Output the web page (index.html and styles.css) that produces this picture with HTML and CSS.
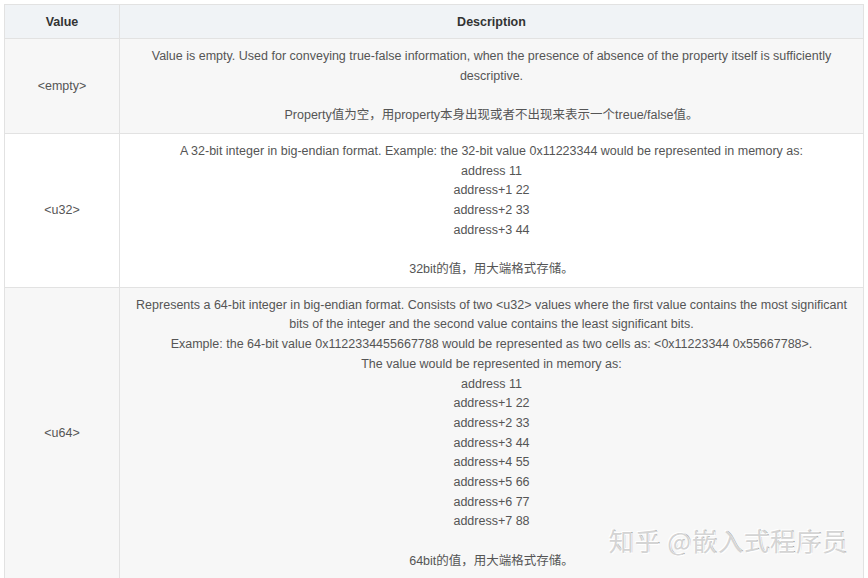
FILE: index.html
```html
<!DOCTYPE html>
<html lang="en">
<head>
  <meta charset="UTF-8">
  <title>Property Value Types</title>
  <link rel="stylesheet" href="styles.css">
</head>
<body>
  <div class="wrap">
    <table class="types">
      <thead>
        <tr>
          <th class="col-value">Value</th>
          <th>Description</th>
        </tr>
      </thead>
      <tbody>
        <tr class="alt">
          <td>&lt;empty&gt;</td>
          <td>
            Value is empty. Used for conveying true-false information, when the presence of absence of the property itself is sufficiently descriptive.<br>
            <br>
            <span class="zh">Property值为空，用property本身出现或者不出现来表示一个treue/false值。</span>
          </td>
        </tr>
        <tr>
          <td>&lt;u32&gt;</td>
          <td>
            A 32-bit integer in big-endian format. Example: the 32-bit value 0x11223344 would be represented in memory as:<br>
            address 11<br>
            address+1 22<br>
            address+2 33<br>
            address+3 44<br>
            <br>
            <span class="zh">32bit的值，用大端格式存储。</span>
          </td>
        </tr>
        <tr class="alt">
          <td>&lt;u64&gt;</td>
          <td>
            Represents a 64-bit integer in big-endian format. Consists of two &lt;u32&gt; values where the first value contains the most significant bits of the integer and the second value contains the least significant bits.<br>
            Example: the 64-bit value 0x1122334455667788 would be represented as two cells as: &lt;0x11223344 0x55667788&gt;.<br>
            The value would be represented in memory as:<br>
            address 11<br>
            address+1 22<br>
            address+2 33<br>
            address+3 44<br>
            address+4 55<br>
            address+5 66<br>
            address+6 77<br>
            address+7 88<br>
            <br>
            <span class="zh">64bit的值，用大端格式存储。</span>
          </td>
        </tr>
      </tbody>
    </table>
    <div class="watermark">知乎 @嵌入式程序员</div>
  </div>
</body>
</html>
```

FILE: styles.css
```css
body { margin: 0; background: #fff; font-family: "Liberation Sans", Arial, "Noto Sans CJK SC", sans-serif; }
.wrap { position: relative; padding: 4px 4px 0 4px; }
.types { width: 860px; border-collapse: collapse; font-size: 12.5px; color: #555; }
.types th, .types td { border: 1px solid #e2e2e2; text-align: center; vertical-align: middle; }
.types th { background: #f0f3f6; color: #333; font-weight: bold; height: 33px; padding: 0 8px; }
.types td { padding: 8px 15px 7px; line-height: 19.7px; }
.types .col-value { width: 114px; padding: 0; }
.types tr.alt td { background: #f7f7f7; }
.types td:first-child { padding: 8px 4px 7px; }
.zh { display: inline-block; height: 19.7px; line-height: 19.7px; vertical-align: top; }
.watermark { position: absolute; right: 20px; bottom: 22px; font-family: "Noto Sans CJK SC", sans-serif; font-size: 25px; color: #d4d4d4; letter-spacing: 1px; text-shadow: 1px 1px 0 #fff, -1px -1px 0 #fff, 1px 0 0 #9a9a9a; }
```
